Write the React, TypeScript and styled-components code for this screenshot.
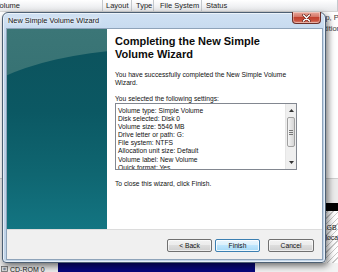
import styled, { createGlobalStyle } from 'styled-components';

const GlobalStyle = createGlobalStyle`
  html, body { margin: 0; padding: 0; }
  body {
    width: 338px;
    height: 272px;
    overflow: hidden;
    background: #fff;
    font-family: "Liberation Sans", Arial, sans-serif;
  }
`;

const Screen = styled.div`
  position: relative;
  width: 338px;
  height: 272px;
  overflow: hidden;
  display: flex;
  flex-direction: column;
  background: #fff;
  color: #1b1b1b;
`;

/* ---- Disk Management behind the wizard ---- */

const ColumnHeader = styled.div`
  display: flex;
  flex: 0 0 12px;
  box-sizing: border-box;
  background: linear-gradient(#ffffff, #f2f3f5 50%, #e8e9eb);
  border-bottom: 1px solid #d5d5d5;
`;

const HeaderCell = styled.div<{ $width?: number; $pad?: number; $indent?: number }>`
  flex: ${p => (p.$width ? `0 0 ${p.$width}px` : '1 1 auto')};
  box-sizing: border-box;
  padding-left: ${p => p.$pad ?? 3}px;
  text-indent: ${p => p.$indent ?? 0}px;
  border-right: 1px solid #c4c8cd;
  font-size: 7.5px;
  line-height: 11px;
  white-space: nowrap;
  overflow: hidden;
  color: #1e1e1e;
`;

const VolumeList = styled.div`
  flex: 0 0 166px;
  display: flex;
  flex-direction: column;
  background: #fff;
`;

const VolumeRow = styled.div`
  display: flex;
  height: 11px;
  font-size: 7.5px;
  line-height: 11px;
  white-space: nowrap;
  color: #3a3a3a;
`;

const VolumeCell = styled.div<{ $width?: number; $pad?: number; $indent?: number }>`
  flex: ${p => (p.$width ? `0 0 ${p.$width}px` : '1 1 auto')};
  padding-left: ${p => p.$pad ?? 3}px;
  text-indent: ${p => p.$indent ?? 0}px;
  overflow: hidden;
`;

const PaneGap = styled.div`
  flex: 0 0 25px;
  box-sizing: border-box;
  background: #ececec;
  border-top: 1px solid #d0d0d0;
`;

const DiskRow = styled.div`
  flex: 0 0 60px;
  display: flex;
`;

const DiskLabel = styled.div`
  flex: 0 0 58px;
  box-sizing: border-box;
  padding: 4px 0 0 9px;
  background: #ececec;
  border-right: 1px solid #c8c8c8;
  font-size: 7px;
  line-height: 9px;
`;

const Partition = styled.div<{ $head: string; $width?: number; $hatched?: boolean }>`
  flex: ${p => (p.$width ? `0 0 ${p.$width}px` : '1 1 auto')};
  box-sizing: border-box;
  border-top: 8px solid ${p => p.$head};
  padding: 12px 0 0 5px;
  font-size: 7px;
  line-height: 10px;
  white-space: nowrap;
  overflow: hidden;
  color: #222;
  background: ${p =>
    p.$hatched
      ? 'repeating-linear-gradient(135deg, #ffffff 0 3px, #c9c9c9 3px 4px)'
      : '#ffffff'};
`;

const CdRow = styled.div`
  flex: 1;
  display: flex;
`;

const CdLabel = styled.div`
  flex: 0 0 58px;
  display: flex;
  align-items: flex-start;
  gap: 2px;
  padding: 2px 0 0 1px;
  box-sizing: border-box;
  background: #ececec;
  font-size: 7px;
  line-height: 9px;
`;

const CdMedia = styled.div`
  flex: 0 0 197px;
  background: #08087c;
`;

const CdRest = styled.div`
  flex: 1;
  background: #f3f3f3;
`;

/* ---- wizard window ---- */

const Wizard = styled.div`
  position: absolute;
  left: 2px;
  top: 12px;
  width: 324px;
  height: 251px;
  box-sizing: border-box;
  display: flex;
  flex-direction: column;
  border: 1px solid #4d6074;
  border-radius: 6px 6px 4px 4px;
  background: linear-gradient(#d0e1f3, #bfd5ec 12%, #b9cfe6 60%, #c3d6ea);
  box-shadow: 2px 3px 7px rgba(0, 0, 0, 0.55), inset 0 0 0 1px rgba(255, 255, 255, 0.6);
`;

const TitleBar = styled.div`
  flex: 0 0 16px;
  display: flex;
  align-items: flex-start;
  padding-left: 5px;
`;

const TitleText = styled.span`
  flex: 1;
  font-size: 7.4px;
  line-height: 16px;
  color: #151515;
  text-shadow: 0 0 3px #fff, 0 0 5px #fff;
`;

const CloseButton = styled.div`
  flex: 0 0 29px;
  height: 12px;
  margin: -1px 4px 0 0;
  box-sizing: border-box;
  display: flex;
  align-items: center;
  justify-content: center;
  border: 1px solid #6b302a;
  border-top: none;
  border-radius: 0 0 4px 4px;
  background: linear-gradient(#e9a99b, #d47566 45%, #c2412f 50%, #c9533f 80%, #e09282);
  box-shadow: inset 0 0 0 1px rgba(255, 255, 255, 0.35);
`;

const Client = styled.div`
  flex: 1;
  margin: 0 3px 3px 4px;
  display: flex;
  flex-direction: column;
  box-shadow: 0 0 0 1px #8ea3b9;
  background: #f0f0f0;
`;

const Main = styled.div`
  flex: 0 0 200px;
  display: flex;
`;

const SidePanel = styled.div`
  flex: 0 0 100px;
  position: relative;
  overflow: hidden;
  background: linear-gradient(#3b7677, #2c6769);

  &::before {
    content: '';
    position: absolute;
    left: -40px;
    top: 19px;
    width: 400px;
    height: 181px;
    border-radius: 200px 200px 0 0 / 68px 68px 0 0;
    background: linear-gradient(#0c535d, #0b5863 35%, #0f6671 70%, #137582);
  }
`;

const Content = styled.div`
  flex: 1;
  display: flex;
  flex-direction: column;
  align-items: flex-start;
  box-sizing: border-box;
  padding: 6px 0 0 8px;
  background: #fff;
`;

const Heading = styled.h1`
  margin: 0;
  font-size: 11px;
  line-height: 13px;
  font-weight: bold;
  color: #0c0c0c;
`;

const Paragraph = styled.p<{ $gap: number }>`
  margin: ${p => p.$gap}px 0 0;
  max-width: 186px;
  font-size: 6.7px;
  line-height: 8px;
  color: #111;
`;

const ListBox = styled.div`
  width: 182px;
  height: 67px;
  box-sizing: border-box;
  display: flex;
  border: 1px solid #828790;
  background: #fff;
`;

const ListItems = styled.div`
  flex: 1;
  overflow: hidden;
  padding: 3px 0 0 2px;
  font-size: 6.7px;
  line-height: 8.1px;
  white-space: nowrap;
  color: #111;
`;

const ScrollBar = styled.div`
  flex: 0 0 10px;
  display: flex;
  flex-direction: column;
  background: #efefef;
  border-left: 1px solid #e6e6e6;
`;

const ScrollArrow = styled.div`
  flex: 0 0 13px;
  display: flex;
  align-items: center;
  justify-content: center;
`;

const ScrollTrack = styled.div`
  flex: 1;
  display: flex;
  flex-direction: column;
`;

const ScrollThumb = styled.div`
  height: 30px;
  margin: 0 1px;
  box-sizing: border-box;
  display: flex;
  align-items: center;
  justify-content: center;
  border: 1px solid #a0a0a0;
  border-radius: 2px;
  background: linear-gradient(to right, #f6f6f6, #e4e4e4 50%, #d6d6d6);
`;

const ButtonBar = styled.div`
  flex: 1;
  display: flex;
  justify-content: flex-end;
  align-items: flex-start;
  box-sizing: border-box;
  padding: 9px 8px 0 0;
  border-top: 1px solid #dcdcdc;
  background: #f0f0f0;
`;

const Button = styled.div<{ $primary?: boolean; $space?: number; $width?: number }>`
  width: ${p => p.$width ?? 45}px;
  height: 13px;
  margin-left: ${p => p.$space ?? 0}px;
  box-sizing: border-box;
  display: flex;
  align-items: center;
  justify-content: center;
  border: 1px solid ${p => (p.$primary ? '#3c7fb1' : '#707070')};
  border-radius: 2px;
  background: ${p =>
    p.$primary
      ? 'linear-gradient(#eaf6fd, #d9f0fc 50%, #bee6fd 50%, #a7d9f5)'
      : 'linear-gradient(#f2f2f2, #ebebeb 50%, #dddddd 50%, #cfcfcf)'};
  box-shadow: inset 0 0 0 1px ${p => (p.$primary ? 'rgba(255,255,255,0.8)' : 'rgba(255,255,255,0.6)')};
  font-size: 6.7px;
  color: #111;
`;

const settings = [
  'Volume type: Simple Volume',
  'Disk selected: Disk 0',
  'Volume size: 5546 MB',
  'Drive letter or path: G:',
  'File system: NTFS',
  'Allocation unit size: Default',
  'Volume label: New Volume',
  'Quick format: Yes',
];

const volumes = [
  { name: '(C:)', status: 'Healthy (Boot, Page File, Crash Dump, Primary Partition)' },
  { name: 'System Reserved', status: 'Healthy (System, Active, Primary Partition)' },
  { name: 'DVD (D:)', status: 'Healthy (Primary Partition)' },
];

export default function App() {
  return (
    <Screen>
      <GlobalStyle />
      <ColumnHeader>
        <HeaderCell $width={103} $pad={0} $indent={-5}>Volume</HeaderCell>
        <HeaderCell $width={29} $pad={3}>Layout</HeaderCell>
        <HeaderCell $width={22} $pad={4}>Type</HeaderCell>
        <HeaderCell $width={48} $pad={6}>File System</HeaderCell>
        <HeaderCell $pad={4}>Status</HeaderCell>
      </ColumnHeader>

      <VolumeList>
        {volumes.map(v => (
          <VolumeRow key={v.name}>
            <VolumeCell $width={103}>{v.name}</VolumeCell>
            <VolumeCell $width={29}>Simple</VolumeCell>
            <VolumeCell $width={22}>Basic</VolumeCell>
            <VolumeCell $width={48}>NTFS</VolumeCell>
            <VolumeCell $pad={2} $indent={-14}>{v.status}</VolumeCell>
          </VolumeRow>
        ))}
      </VolumeList>

      <PaneGap />

      <DiskRow>
        <DiskLabel>
          Disk 0
          <br />
          Basic
          <br />
          232.88 GB
        </DiskLabel>
        <Partition $head="#1a3fb8" $width={248}>
          (C:)
        </Partition>
        <Partition $head="#000" $hatched>
          5.42 GB
          <br />
          Unallocated
        </Partition>
      </DiskRow>

      <CdRow>
        <CdLabel>
          <svg width="7" height="7" viewBox="0 0 7 7">
            <rect x="0.5" y="1.5" width="6" height="5" fill="#d8d8d8" stroke="#666" strokeWidth="0.8" />
            <circle cx="3.5" cy="4" r="1.3" fill="#7a8ca0" />
          </svg>
          <span>CD-ROM 0</span>
        </CdLabel>
        <CdMedia />
        <CdRest />
      </CdRow>

      <Wizard>
        <TitleBar>
          <TitleText>New Simple Volume Wizard</TitleText>
          <CloseButton>
            <svg width="9" height="8" viewBox="0 0 9 8">
              <path d="M1.5 1 L7.5 7 M7.5 1 L1.5 7" stroke="#5a1d16" strokeWidth="2.6" strokeLinecap="round" />
              <path d="M1.5 1 L7.5 7 M7.5 1 L1.5 7" stroke="#ffffff" strokeWidth="1.5" strokeLinecap="round" />
            </svg>
          </CloseButton>
        </TitleBar>

        <Client>
          <Main>
            <SidePanel />
            <Content>
              <Heading>
                Completing the New Simple
                <br />
                Volume Wizard
              </Heading>
              <Paragraph $gap={10}>
                You have successfully completed the New Simple Volume Wizard.
              </Paragraph>
              <Paragraph $gap={8}>You selected the following settings:</Paragraph>
              <ListBox>
                <ListItems>
                  {settings.map(s => (
                    <div key={s}>{s}</div>
                  ))}
                </ListItems>
                <ScrollBar>
                  <ScrollArrow>
                    <svg width="5" height="3" viewBox="0 0 5 3">
                      <path d="M0 3 L2.5 0 L5 3 Z" fill="#333" />
                    </svg>
                  </ScrollArrow>
                  <ScrollTrack>
                    <ScrollThumb>
                      <svg width="4" height="5" viewBox="0 0 4 5">
                        <path d="M0 0.5 H4 M0 2.5 H4 M0 4.5 H4" stroke="#777" strokeWidth="1" />
                      </svg>
                    </ScrollThumb>
                  </ScrollTrack>
                  <ScrollArrow>
                    <svg width="5" height="3" viewBox="0 0 5 3">
                      <path d="M0 0 L2.5 3 L5 0 Z" fill="#333" />
                    </svg>
                  </ScrollArrow>
                </ScrollBar>
              </ListBox>
              <Paragraph $gap={10}>To close this wizard, click Finish.</Paragraph>
            </Content>
          </Main>

          <ButtonBar>
            <Button>&lt; Back</Button>
            <Button $primary $space={3}>Finish</Button>
            <Button $space={8} $width={46}>Cancel</Button>
          </ButtonBar>
        </Client>
      </Wizard>
    </Screen>
  );
}
